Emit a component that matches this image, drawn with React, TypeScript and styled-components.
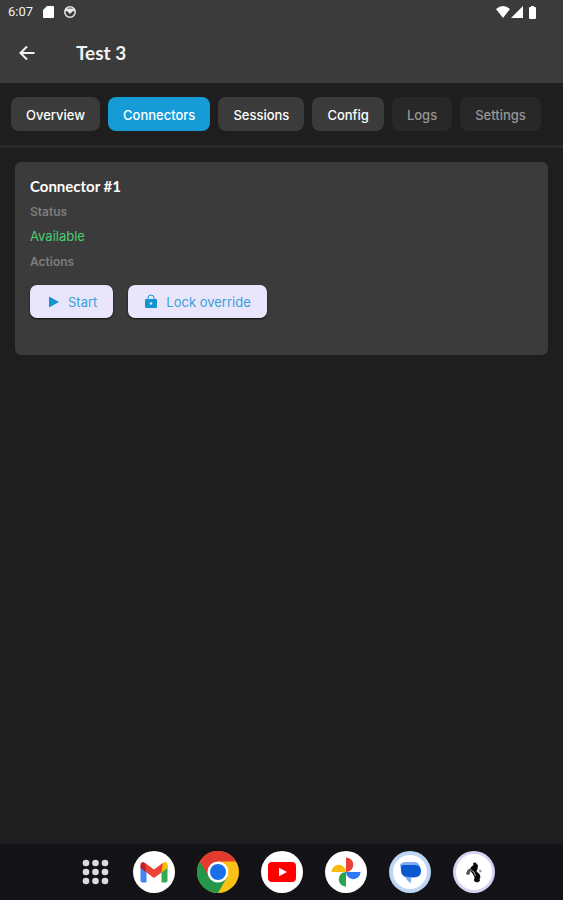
import React from "react";
import styled, { createGlobalStyle, css } from "styled-components";

const GlobalStyle = createGlobalStyle`
  * { box-sizing: border-box; }
  body { margin: 0; background: #1e1e1e; }
  button { font: inherit; margin: 0; cursor: pointer; }
`;

const Screen = styled.div`
  display: flex;
  flex-direction: column;
  min-height: 100vh;
  background: #1e1e1e;
  color: #fff;
  font-family: Inter, "Liberation Sans", sans-serif;
`;

const StatusBar = styled.div`
  display: flex;
  align-items: center;
  justify-content: space-between;
  height: 24px;
  padding: 0 26px 0 8px;
  background: #3b3b3b;
  color: #f2f2f2;
  font: 400 13px/24px Roboto, sans-serif;
`;

const StatusGroup = styled.div<{ $gap: number }>`
  display: flex;
  align-items: center;
  gap: ${(p) => p.$gap}px;
`;

const Header = styled.header`
  display: flex;
  align-items: center;
  gap: 40px;
  height: 59px;
  padding: 0 18px 2px;
  background: #3b3b3b;
`;

const BackButton = styled.button`
  display: flex;
  padding: 0;
  border: 0;
  background: none;
  color: #f2f2f2;
`;

const Title = styled.h1`
  margin: 0;
  color: #f2f2f2;
  font: 700 19px/24px Lato, sans-serif;
`;

const Tabs = styled.nav`
  display: flex;
  gap: 8px;
  padding: 14px 11px;
  border-bottom: 3px solid #2a2a2a;
  overflow: hidden;
`;

const Tab = styled.button<{ $active?: boolean }>`
  flex: none;
  height: 34px;
  padding: 1px 15px 0;
  border: 0;
  border-radius: 8px;
  background: #3b3b3b;
  color: #fff;
  font-weight: 500;
  font-size: 13px;
  line-height: 20px;
  ${(p) => p.$active && css`background: #169bd7;`}
  &:disabled {
    background: #282828;
    color: #979797;
    cursor: default;
  }
`;

const Content = styled.main`
  flex: 1;
  padding: 14px 15px;
`;

const Card = styled.section`
  padding: 12px 15px 37px;
  border-radius: 6px;
  background: #3b3b3b;
`;

const CardTitle = styled.h2`
  margin: 0;
  font: 700 15px/25px Lato, sans-serif;
`;

const Label = styled.div`
  color: #7d7d7d;
  font-size: 12px;
  font-weight: 600;
  line-height: 25px;
`;

const Value = styled.div`
  color: #48cf70;
  font-size: 13px;
  line-height: 25px;
`;

const Actions = styled.div`
  display: flex;
  gap: 15px;
  margin-top: 11px;
`;

const ActionButton = styled.button`
  display: flex;
  align-items: center;
  gap: 7px;
  height: 33px;
  padding: 0 16px 0 15px;
  border: 0;
  border-radius: 7px;
  background: #e9e6fc;
  box-shadow: 0 1px 2px #111;
  color: #3a9fd8;
  font-size: 13px;
`;

const Dock = styled.footer`
  display: flex;
  align-items: center;
  justify-content: center;
  gap: 22px;
  height: 56px;
  padding-left: 11px;
  background: #131317;
`;

const DockButton = styled.button`
  display: flex;
  padding: 0;
  border: 0;
  background: none;
`;

const tabs = [
  { label: "Overview" },
  { label: "Connectors", active: true },
  { label: "Sessions" },
  { label: "Config" },
  { label: "Logs", disabled: true },
  { label: "Settings", disabled: true },
];

const AppsIcon = () => (
  <svg width="31" height="42" viewBox="0 0 31 42" fill="#dcdbe0">
    {[12, 21, 30].map((y) => [6, 15.5, 25].map((x) => <circle key={`${x}-${y}`} cx={x} cy={y} r="3.3" />))}
  </svg>
);

const GmailIcon = () => (
  <svg width="42" height="42" viewBox="0 0 42 42">
    <circle cx="21" cy="21" r="21" fill="#fff" />
    <path d="M7.500 14v15.500q0 2 2 2h4V19z" fill="#4285f4" />
    <path d="M28.500 19v12.500h4q2 0 2-2V14z" fill="#34a853" />
    <path d="M28.500 13.500v8l6-4.500v-3q0-3-3-3z" fill="#fbbc04" />
    <path d="M13.500 13.500v8l-6-4.500v-3q0-3 3-3z" fill="#c5221f" />
    <path d="M12 11.800 21 18.500l9-6.700-1.500 9.700L21 27l-7.500-5.500z" fill="#ea4335" />
  </svg>
);

const ChromeIcon = () => (
  <svg width="42" height="42" viewBox="0 0 42 42">
    <circle cx="21" cy="21" r="21" fill="#fbc116" />
    <path d="M21 21 2.800 10.500A21 21 0 0 0 21 42L30 26z" fill="#22974a" />
    <path d="M21 21 12 26 2.800 10.500A21 21 0 0 1 39.200 10.500H21z" fill="#e33b2e" />
    <circle cx="21" cy="21" r="10.500" fill="#fff" />
    <circle cx="21" cy="21" r="8" fill="#1a6fe8" />
  </svg>
);

const YouTubeIcon = () => (
  <svg width="42" height="42" viewBox="0 0 42 42">
    <circle cx="21" cy="21" r="21" fill="#fff" />
    <rect x="7" y="11" width="28" height="20" rx="4" fill="#f00" />
    <path d="m18 16.800 8 4.200-8 4.200z" fill="#fff" />
  </svg>
);

const PhotosIcon = () => (
  <svg width="42" height="42" viewBox="0 0 42 42">
    <circle cx="21" cy="21" r="21" fill="#fff" />
    <path d="M21 21V6.500a7.200 7.200 0 0 1 0 14.500z" fill="#ea4335" />
    <path d="M21 21h14.500a7.200 7.200 0 0 1-14.500 0z" fill="#2d79f0" />
    <path d="M21 21v14.500a7.200 7.200 0 0 1 0-14.500z" fill="#2ba24c" />
    <path d="M21 21H6.500a7.200 7.200 0 0 1 14.500 0z" fill="#fbb90c" />
  </svg>
);

const MessagesIcon = () => (
  <svg width="42" height="42" viewBox="0 0 42 42">
    <circle cx="21" cy="21" r="21" fill="#bdd6f6" />
    <circle cx="21" cy="21" r="17" fill="#fff" />
    <path d="M11 13.500Q13 11 16 11h9q5 0 6 5l-2 9q-2 2-7 2v5q-3-1-5.500-5.500Q12 24 12 19z" fill="#7eaef2" />
    <path d="M18 14h8q6 0 6 6t-6 6h-7q-7 0-7-7v-3q0-2 2-2z" fill="#0b57d0" />
  </svg>
);

const RunnerIcon = () => (
  <svg width="42" height="42" viewBox="0 0 42 42">
    <circle cx="21" cy="21" r="21" fill="#d9d2f4" />
    <circle cx="21" cy="21" r="18" fill="#fff" />
    <path d="m20 12 3-.5.500 1.500 1.500 1-.5 4-1 2.500 3 2.500 1 3-1 2 .5 2-3 1.500-3-1.500.5-4-2-3.500-2.500-3 1-3.500 2.500-2z" fill="#080808" />
    <path d="m17.500 17-3 2-1.500 4 1.500 1 2-.5.500-2z" fill="#555" />
    <path d="m26 18.500 2.500.5v2l-2 .5z" fill="#999" />
    <path d="m18 19 3 2 1.500 4" fill="none" stroke="#aaa" />
  </svg>
);

const dockApps = [
  { name: "All apps", Icon: AppsIcon },
  { name: "Gmail", Icon: GmailIcon },
  { name: "Chrome", Icon: ChromeIcon },
  { name: "YouTube", Icon: YouTubeIcon },
  { name: "Photos", Icon: PhotosIcon },
  { name: "Messages", Icon: MessagesIcon },
  { name: "Runner", Icon: RunnerIcon },
];

export default function App() {
  return (
    <Screen>
      <GlobalStyle />
      <StatusBar>
        <StatusGroup $gap={10}>
          <span>6:07</span>
          <svg width="11" height="12" viewBox="0 0 11 12"><path d="M4 0h6q1 0 1 1v10q0 1-1 1H1q-1 0-1-1V4z" fill="#fff" /></svg>
          <svg width="12" height="12" viewBox="0 0 12 12"><circle cx="6" cy="6" r="5.200" fill="none" stroke="#e8e8e8" strokeWidth="1.500" /><path d="M1 2.500h10v3L9 5 6 8 3 5 1 5.500z" fill="#e8e8e8" /></svg>
        </StatusGroup>
        <StatusGroup $gap={1}>
          <svg width="14" height="12" viewBox="0 0 14 12"><path d="M0 3Q7-3 14 3L7 12z" fill="#fff" /></svg>
          <svg width="12" height="12" viewBox="0 0 12 12"><path d="M12 0v12H0z" fill="#fff" /></svg>
          <svg width="13" height="13" viewBox="0 0 13 13"><path d="M7 0h3v1h1q1 0 1 1v10q0 1-1 1H6q-1 0-1-1V2q0-1 1-1h1z" fill="#fff" /></svg>
        </StatusGroup>
      </StatusBar>
      <Header>
        <BackButton aria-label="Back">
          <svg width="18" height="18" viewBox="0 0 18 18" fill="none" stroke="currentColor" strokeWidth="2"><path d="M16.500 9H3M9 2.500 2.500 9 9 15.500" /></svg>
        </BackButton>
        <Title>Test 3</Title>
      </Header>
      <Tabs>
        {tabs.map((t) => (
          <Tab key={t.label} $active={t.active} disabled={t.disabled}>{t.label}</Tab>
        ))}
      </Tabs>
      <Content>
        <Card>
          <CardTitle>Connector #1</CardTitle>
          <Label>Status</Label>
          <Value>Available</Value>
          <Label>Actions</Label>
          <Actions>
            <ActionButton>
              <svg width="16" height="16" viewBox="0 0 16 16"><path d="M4 2.500v11L14 8z" fill="#1295d0" /></svg>
              Start
            </ActionButton>
            <ActionButton>
              <svg width="16" height="16" viewBox="0 0 16 16"><path d="M5 6V4a3 3 0 0 1 6 0v2" fill="none" stroke="#1295d0" /><rect x="2" y="5" width="12" height="9" rx="1" fill="#1295d0" /><circle cx="8" cy="9.500" r="1.300" fill="#e9e6fc" /></svg>
              Lock override
            </ActionButton>
          </Actions>
        </Card>
      </Content>
      <Dock>
        {dockApps.map(({ name, Icon }) => (
          <DockButton key={name} aria-label={name}><Icon /></DockButton>
        ))}
      </Dock>
    </Screen>
  );
}
